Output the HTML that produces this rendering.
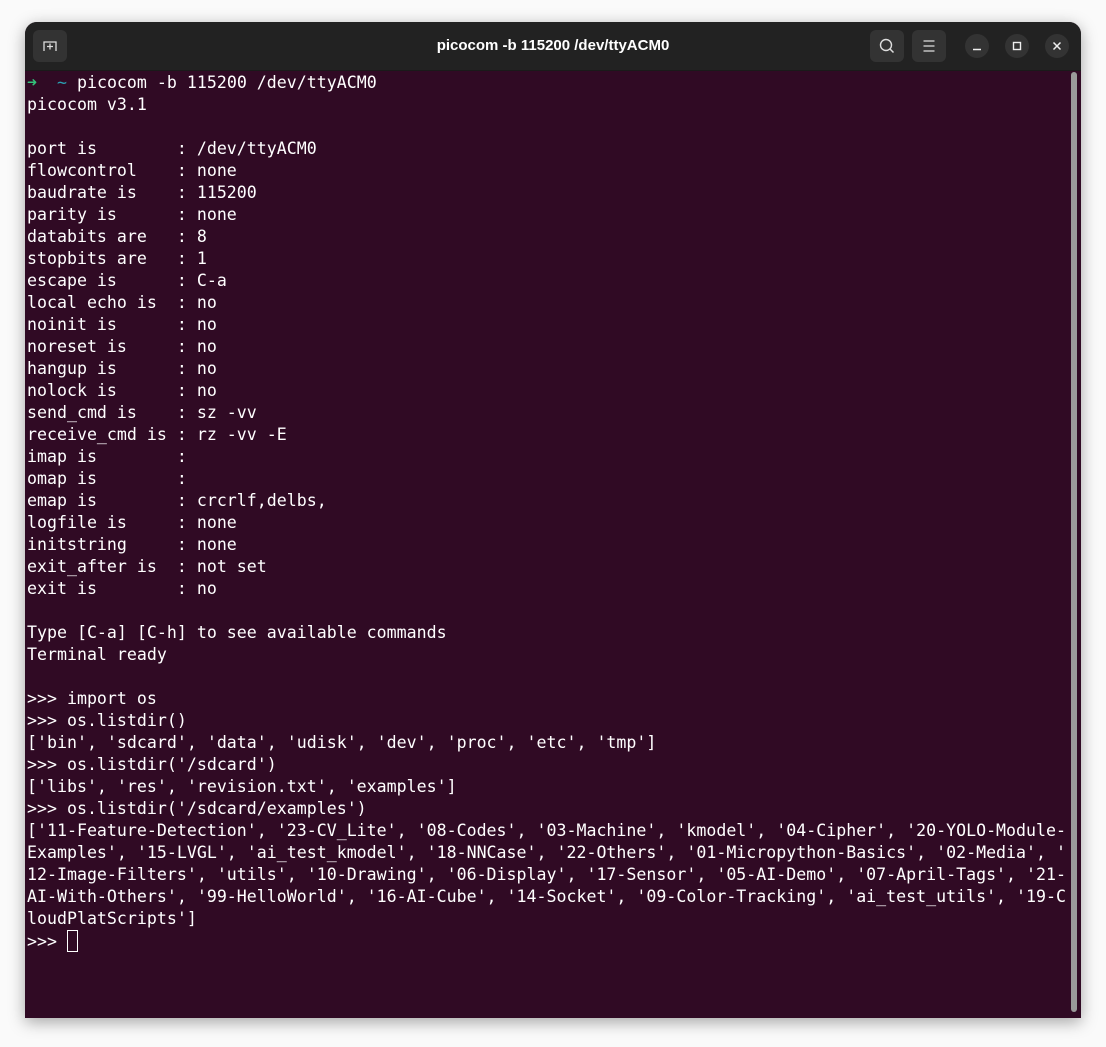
<!DOCTYPE html>
<html><head><meta charset="utf-8"><style>
html,body{margin:0;padding:0;background:#fafafa;width:1106px;height:1047px;overflow:hidden}
.win{position:absolute;left:25px;top:22px;width:1056px;height:996px;border-radius:12px 12px 0 0;overflow:hidden;box-shadow:0 4px 16px rgba(0,0,0,.35);background:#300a24}
.tb{position:absolute;left:0;top:0;width:100%;height:48px;background:#222222;border-bottom:1px solid #1a1a1a}
.title{position:absolute;left:0;right:0;top:15px;text-align:center;color:#fff;font:bold 15px "Liberation Sans",sans-serif}
.btn{position:absolute;top:8px;width:34px;height:32px;border-radius:6px;background:#333}
.cir{position:absolute;top:12px;width:24px;height:24px;border-radius:50%;background:#333}
pre{position:absolute;left:2px;top:50px;margin:0;color:#ffffff;font-family:"DejaVu Sans Mono","Liberation Mono",monospace;font-size:16.6px;line-height:22px;white-space:pre}
.g{color:#33c27a;font-weight:bold}.c{color:#2aa1b3}
.sb{position:absolute;left:1046px;top:50px;width:6px;height:940px;border-radius:3px;background:#9a9a9a}
.cur{display:inline-block;width:9px;height:20px;border:1px solid #fff;vertical-align:-5px}
</style></head><body>
<div class="win">
<div class="tb">
<div class="btn" style="left:8px"><svg width="34" height="32"><path d="M11 21V12h12v9M17 13.5v6M14 16.5h6" stroke="#ddd" stroke-width="1.3" fill="none"/></svg></div>
<div class="title">picocom -b 115200 /dev/ttyACM0</div>
<div class="btn" style="left:845px"><svg width="34" height="32"><circle cx="16" cy="15" r="5.5" stroke="#ddd" stroke-width="1.4" fill="none"/><path d="M20 19l3.5 3.5" stroke="#ddd" stroke-width="1.5"/></svg></div>
<div class="btn" style="left:887px"><svg width="34" height="32"><path d="M11.5 11h11M11.5 16h11M11.5 21h11" stroke="#ddd" stroke-width="1.3"/></svg></div>
<div class="cir" style="left:940px"><svg width="24" height="24"><path d="M8 15.5h8" stroke="#eee" stroke-width="1.5"/></svg></div>
<div class="cir" style="left:980px"><svg width="24" height="24"><rect x="8.5" y="8.5" width="7" height="7" stroke="#eee" stroke-width="1.4" fill="none"/></svg></div>
<div class="cir" style="left:1020px"><svg width="24" height="24"><path d="M8.5 8.5l7 7M15.5 8.5l-7 7" stroke="#eee" stroke-width="1.5"/></svg></div>
</div>
<pre><span class="g">➜</span>  <span class="c">~</span> picocom -b 115200 /dev/ttyACM0
picocom v3.1

port is        : /dev/ttyACM0
flowcontrol    : none
baudrate is    : 115200
parity is      : none
databits are   : 8
stopbits are   : 1
escape is      : C-a
local echo is  : no
noinit is      : no
noreset is     : no
hangup is      : no
nolock is      : no
send_cmd is    : sz -vv
receive_cmd is : rz -vv -E
imap is        : 
omap is        : 
emap is        : crcrlf,delbs,
logfile is     : none
initstring     : none
exit_after is  : not set
exit is        : no

Type [C-a] [C-h] to see available commands
Terminal ready

>>> import os
>>> os.listdir()
['bin', 'sdcard', 'data', 'udisk', 'dev', 'proc', 'etc', 'tmp']
>>> os.listdir('/sdcard')
['libs', 'res', 'revision.txt', 'examples']
>>> os.listdir('/sdcard/examples')
['11-Feature-Detection', '23-CV_Lite', '08-Codes', '03-Machine', 'kmodel', '04-Cipher', '20-YOLO-Module-
Examples', '15-LVGL', 'ai_test_kmodel', '18-NNCase', '22-Others', '01-Micropython-Basics', '02-Media', '
12-Image-Filters', 'utils', '10-Drawing', '06-Display', '17-Sensor', '05-AI-Demo', '07-April-Tags', '21-
AI-With-Others', '99-HelloWorld', '16-AI-Cube', '14-Socket', '09-Color-Tracking', 'ai_test_utils', '19-C
loudPlatScripts']
>>> <span class="cur"></span></pre>
<div class="sb"></div>
</div>
</body></html>
